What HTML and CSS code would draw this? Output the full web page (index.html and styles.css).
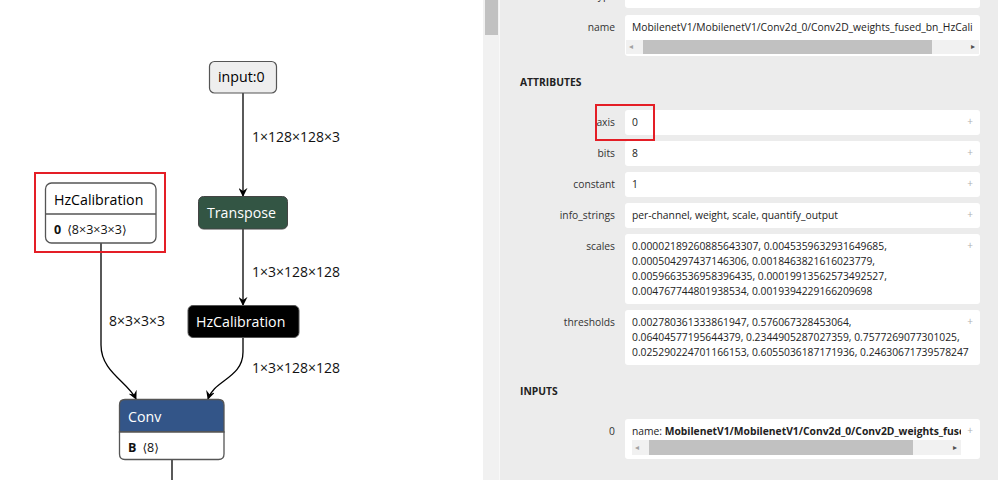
FILE: index.html
```html
<!DOCTYPE html>
<html>
<head>
<meta charset="utf-8">
<link rel="stylesheet" href="styles.css">
</head>
<body>
<div class="app">
  <div class="graph">
    <svg class="canvas" width="483" height="480" viewBox="0 0 483 480" xmlns="http://www.w3.org/2000/svg">
      <defs>
        <marker id="arrow" viewBox="0 0 10 10" refX="9" refY="5" markerUnits="userSpaceOnUse" markerWidth="9" markerHeight="9" orient="auto">
          <path d="M0 0 L10 5 L0 10 L3.5 5 Z" fill="#000"/>
        </marker>
      </defs>
      <!-- edges -->
      <path class="edge" d="M243 93 L243 196" marker-end="url(#arrow)"/>
      <path class="edge" d="M243 229 L243 305" marker-end="url(#arrow)"/>
      <path class="edge" d="M243 338 L243 352 C243 378 214 380 208 399" marker-end="url(#arrow)"/>
      <path class="edge" d="M101 243 L101 345 C101 372 128 382 136 399" marker-end="url(#arrow)"/>
      <path class="edge" d="M172 460 L172 480"/>
      <text class="elabel" x="252" y="142">1×128×128×3</text>
      <text class="elabel" x="252" y="277">1×3×128×128</text>
      <text class="elabel" x="252" y="373">1×3×128×128</text>
      <text class="elabel" x="109" y="326">8×3×3×3</text>
      <!-- input node -->
      <rect class="n-input" x="209.5" y="61.5" width="67" height="31.5" rx="5"/>
      <text class="ntext dark" x="218" y="82">input:0</text>
      <!-- transpose -->
      <rect class="n-transform" x="198.5" y="196.5" width="89" height="32.5" rx="5"/>
      <text class="ntext light" x="207" y="218">Transpose</text>
      <!-- black hzcalibration -->
      <rect class="n-black" x="188" y="305.5" width="111" height="32" rx="5"/>
      <text class="ntext light" x="196" y="327">HzCalibration</text>
      <!-- white hzcalibration with attribute -->
      <rect class="n-white" x="45.5" y="183" width="110.5" height="60" rx="6"/>
      <line class="divider" x1="45.5" y1="214" x2="156" y2="214"/>
      <text class="ntext dark" x="54" y="205">HzCalibration</text>
      <text class="atext" x="54" y="234"><tspan class="bold">0</tspan><tspan class="ang" dx="6">⟨</tspan><tspan>8×3×3×3</tspan><tspan class="ang">⟩</tspan></text>
      <rect class="hl" x="35" y="173" width="130" height="79"/>
      <!-- conv -->
      <path class="n-layer" d="M119.5 432 L119.5 405 Q119.5 399.5 125 399.5 L218.5 399.5 Q224 399.5 224 405 L224 432 Z"/>
      <path class="n-layer-body" d="M119.5 432 L224 432 L224 454 Q224 459.5 218.5 459.5 L125 459.5 Q119.5 459.5 119.5 454 Z"/>
      <text class="ntext light" x="128" y="422">Conv</text>
      <text class="atext" x="128" y="452"><tspan class="bold">B</tspan><tspan class="ang" dx="6">⟨</tspan><tspan>8</tspan><tspan class="ang">⟩</tspan></text>
    </svg>
  </div>
  <div class="panel">
    <div class="vscroll"><div class="vthumb"></div></div>
    <div class="sidebar">
      <div class="content">
        <div class="row first">
          <div class="label">type</div>
          <div class="value"><div class="line">HzCalibration</div></div>
        </div>
        <div class="row">
          <div class="label">name</div>
          <div class="value scrolled">
            <div class="line clip">MobilenetV1/MobilenetV1/Conv2d_0/Conv2D_weights_fused_bn_HzCalibration</div>
            <div class="hscroll wide"><span class="arr left">◂</span><div class="hthumb t1"></div><span class="arr right">▸</span></div>
          </div>
        </div>
        <div class="section">ATTRIBUTES</div>
        <div class="row">
          <div class="label">axis</div>
          <div class="value"><div class="line">0</div><span class="plus">+</span></div>
          <div class="mark"></div>
        </div>
        <div class="row">
          <div class="label">bits</div>
          <div class="value"><div class="line">8</div><span class="plus">+</span></div>
        </div>
        <div class="row">
          <div class="label">constant</div>
          <div class="value"><div class="line">1</div><span class="plus">+</span></div>
        </div>
        <div class="row">
          <div class="label">info_strings</div>
          <div class="value"><div class="line">per-channel, weight, scale, quantify_output</div><span class="plus">+</span></div>
        </div>
        <div class="row">
          <div class="label">scales</div>
          <div class="value"><div class="line">0.00002189260885643307, 0.0045359632931649685,</div><div class="line">0.000504297437146306, 0.0018463821616023779,</div><div class="line">0.0059663536958396435, 0.00019913562573492527,</div><div class="line">0.004767744801938534, 0.0019394229166209698</div><span class="plus">+</span></div>
        </div>
        <div class="row">
          <div class="label">thresholds</div>
          <div class="value"><div class="line">0.002780361333861947, 0.576067328453064,</div><div class="line">0.06404577195644379, 0.2344905287027359, 0.7577269077301025,</div><div class="line">0.025290224701166153, 0.6055036187171936, 0.24630671739578247</div><span class="plus">+</span></div>
        </div>
        <div class="section">INPUTS</div>
        <div class="row">
          <div class="label">0</div>
          <div class="value input">
            <div class="line clip">name: <b>MobilenetV1/MobilenetV1/Conv2d_0/Conv2D_weights_fused_bn_HzCalibration</b></div>
            <div class="hscroll"><span class="arr left">◂</span><div class="hthumb t2"></div><span class="arr right">▸</span></div>
            <span class="plus">+</span>
          </div>
        </div>
      </div>
    </div>
  </div>
</div>
</body>
</html>
```
FILE: styles.css
```css
html, body {
  margin: 0;
  padding: 0;
  width: 998px;
  height: 480px;
  overflow: hidden;
  background: #fff;
  font-family: "Open Sans", "Noto Sans", sans-serif;
}
.app {
  display: flex;
  width: 998px;
  height: 480px;
}
.graph {
  width: 483px;
  height: 480px;
  flex: none;
  background: #fff;
}
.canvas {
  display: block;
}
.edge {
  fill: none;
  stroke: #000;
  stroke-width: 1.3;
}
.elabel {
  font-family: "Open Sans", sans-serif;
  font-size: 14px;
  fill: #111;
}
.ntext {
  font-family: "Open Sans", sans-serif;
  font-size: 14.2px;
}
.ntext.dark { fill: #000; }
.ntext.light { fill: #fff; }
.atext {
  font-family: "Open Sans", sans-serif;
  font-size: 12.5px;
  fill: #111;
}
.atext .bold { font-weight: 700; }
.atext .ang { font-family: "DejaVu Sans", sans-serif; font-size: 12px; }
.n-input {
  fill: #eeeeee;
  stroke: #555;
  stroke-width: 1.2;
}
.n-transform {
  fill: #335544;
  stroke: #444;
  stroke-width: 1;
}
.n-black {
  fill: #000;
  stroke: #555;
  stroke-width: 1;
}
.n-white {
  fill: #fff;
  stroke: #555;
  stroke-width: 1.3;
}
.divider {
  stroke: #555;
  stroke-width: 1.3;
}
.n-layer {
  fill: #335588;
  stroke: #555;
  stroke-width: 1.3;
}
.n-layer-body {
  fill: #fff;
  stroke: #555;
  stroke-width: 1.3;
}
.hl {
  fill: none;
  stroke: #e41e26;
  stroke-width: 2;
}

/* panel */
.panel {
  flex: 1;
  min-width: 0;
  display: flex;
  height: 480px;
  background: #ececec;
}
.vscroll {
  width: 16px;
  flex: none;
  background: #f1f1f1;
  border-right: 1px solid #f8f8f8;
}
.vthumb {
  margin-left: 2px;
  width: 13px;
  height: 35px;
  background: #c1c1c1;
}
.sidebar {
  flex: 1;
  min-width: 0;
  overflow: hidden;
}
.content {
  padding: 0 18px 0 20px;
  font-size: 10.3px;
  color: #222;
}
.row {
  display: flex;
  gap: 10px;
  margin-bottom: 6px;
  position: relative;
}
.row.first {
  margin-top: -17px;
  margin-bottom: 7px;
}
.label {
  width: 95px;
  flex: none;
  text-align: right;
  padding-top: 5px;
  line-height: 15px;
  color: #333;
}
.value {
  flex: 1;
  min-width: 0;
  background: #fff;
  border-radius: 3px;
  padding: 5px 7px;
  line-height: 15px;
  position: relative;
  overflow: hidden;
}
.line {
  white-space: nowrap;
}
.clip {
  overflow: hidden;
}
.value.scrolled {
  padding-bottom: 2px;
}
.value.input {
  padding: 5px 19px 4px 7px;
}
.hscroll {
  height: 15px;
  background: #f1f1f1;
  margin-top: 1px;
  position: relative;
}
.hscroll.wide {
  margin: 5px -6px 0 -6px;
  height: 14px;
}
.hthumb {
  height: 100%;
  background: #c1c1c1;
  position: absolute;
  top: 0;
}
.t1 { left: 17px; width: 289px; }
.t2 { left: 17px; width: 264px; }
.arr {
  position: absolute;
  font-family: "DejaVu Sans", sans-serif;
  font-size: 8px;
  line-height: 14px;
  top: 0;
}
.hscroll:not(.wide) .arr { line-height: 15px; }
.arr.left { left: 3px; color: #a3a3a3; }
.arr.right { right: 4px; color: #505050; }
.plus {
  position: absolute;
  top: 4px;
  right: 7px;
  color: #b0b0b0;
  font-size: 10px;
  line-height: 15px;
}
.section {
  font-weight: 700;
  color: #222;
  line-height: 15px;
  margin: 19px 0 20px 0;
}
.mark {
  position: absolute;
  left: 75px;
  top: -6px;
  width: 56px;
  height: 33px;
  border: 2px solid #e41e26;
  pointer-events: none;
}
```
